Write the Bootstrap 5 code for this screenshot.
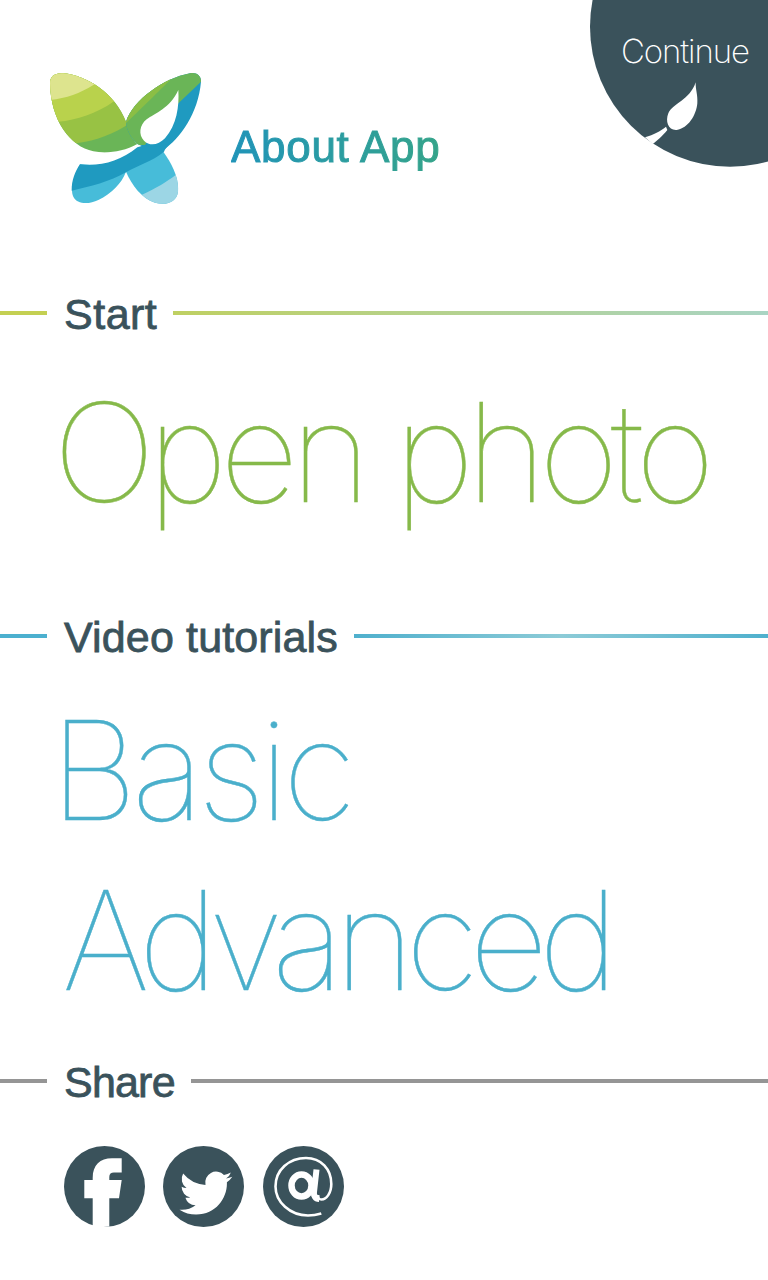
<!DOCTYPE html><html><head><meta charset="utf-8"><title>About App</title><link href="https://cdn.jsdelivr.net/npm/bootstrap@5.3.0/dist/css/bootstrap.min.css" rel="stylesheet"><style>
body{background:#fff;font-family:"Liberation Sans",sans-serif}
.pg{width:768px;height:1280px;overflow:hidden}
.hdr{padding:50px 0 0 30px;height:220px}
.logo{width:200px;height:170px;flex:none}
.ttl{margin:0 0 0 1px;padding-top:73px;font-size:44px;line-height:48px;font-weight:400;letter-spacing:.7px;background:linear-gradient(90deg,#2094b8,#35a48a);-webkit-background-clip:text;background-clip:text;color:transparent;-webkit-text-stroke:1px transparent}
.corner{top:0;right:0;width:188px;height:175px}
.corner svg{width:188px;height:175px;display:block}
.cont{top:29px;left:41px;margin:0;font-family:Inter,sans-serif;font-weight:200;font-size:33px;line-height:44px;letter-spacing:-1.1px;color:#fff}
.sec{height:48px;gap:16px}
.sec h2{margin:0 0 0 1px;padding-top:2px;font-size:43px;line-height:46px;font-weight:400;color:#3a525b;-webkit-text-stroke:.8px #3a525b;white-space:nowrap}
.h-a{letter-spacing:.5px}.h-b{letter-spacing:.15px}.h-c{letter-spacing:-.8px}
.ln{height:4px}
.ln-a{width:47px;flex:none}
.ln-b{flex:1 1 0}
.s1{margin-top:69px}.s2{margin-top:75px}.s3{margin-top:32px}
.g1{background:#c4d052}.g1b{background:linear-gradient(90deg,#bfd062,#a9d4c3)}
.g2{background:#4cb0cf}.g2b{background:linear-gradient(90deg,#4fb0cd,#8ccbd7 50%,#4fb0cd)}
.g3{background:#959595}
.bigt{display:block;font-family:Inter,sans-serif;font-weight:100;font-size:137px;line-height:170px;white-space:nowrap;text-decoration:none;-webkit-text-stroke:.4px currentColor}
.b-o{padding-left:53px;letter-spacing:-7.5px;color:#86b94a}
.b-b{padding-left:50px;letter-spacing:-6px;color:#4aafcb}
.b-a{padding-left:62px;letter-spacing:-9.2px;color:#4aafcb}
.t1{margin-top:30px}.t2{margin-top:25px}
.soc{margin-top:41px;padding-left:64px;gap:18px}
.soc svg{width:81px;height:81px;display:block}
.soc svg:last-child{margin-left:1px}
</style></head><body>
<div class="pg position-relative">
<div class="hdr d-flex align-items-start">
<svg class="logo" viewBox="0 0 600 510" aria-label="logo">
<defs>
<clipPath id="wl"><path d="M60 100C60 78 75 68 100 70C170 76 255 130 288 215C295 245 305 265 322 282C280 305 230 312 190 304C120 290 62 210 60 100Z"/></clipPath>
<clipPath id="wr"><path d="M288 215C310 150 400 85 480 70C500 66 514 78 513 95C505 190 450 265 400 300L340 290L322 282C300 260 290 240 288 215Z"/></clipPath>
<clipPath id="ll"><path d="M150 343C130 380 120 420 130 440C140 462 175 465 205 450C245 430 275 400 288 365L290 340L200 345Z"/></clipPath>
<clipPath id="lr"><path d="M288 365C305 405 335 445 375 458C410 468 440 455 444 425C448 385 425 340 400 305L300 340Z"/></clipPath>
</defs>
<g clip-path="url(#wl)"><rect width="600" height="510" fill="#6ab557"/>
<path d="M40 40H300V220C255 250 200 272 140 280L40 280Z" fill="#98c244"/>
<path d="M40 40H300V130L250 155C200 190 140 210 85 215L40 230Z" fill="#b9d24c"/>
<path d="M40 40H300V70L190 105C150 130 110 145 60 150L40 155Z" fill="#dde48e"/></g>
<g clip-path="url(#wr)"><rect width="600" height="510" fill="#1f9ac0"/>
<path d="M270 230V40H540V70L450 155L400 200L345 285L320 285Z" fill="#6ab557"/>
<path d="M285 222C310 150 360 110 430 80C400 110 340 170 292 215Z" fill="#8bbe45"/></g>
<g clip-path="url(#ll)"><rect width="600" height="510" fill="#47bcd9"/></g>
<g clip-path="url(#lr)"><rect width="600" height="510" fill="#47bcd9"/>
<path d="M336 434C380 415 410 395 436 376L470 360V480H336Z" fill="#9cd6e5"/></g>
<path d="M150 343C210 350 270 335 322 292L345 285C370 295 395 290 420 280C410 292 405 298 402 305C365 335 325 345 288 367C240 395 180 410 125 422C125 390 135 365 150 343Z" fill="#1f9ac0"/>
<path d="M445 120C448 170 440 225 405 265C385 285 360 290 342 272C325 255 328 225 350 208C375 190 420 175 445 120Z" fill="#fff"/>
</svg>
<h1 class="ttl">About App</h1>
</div>
<div class="corner position-absolute">
<svg viewBox="0 0 564 525" aria-label="Continue badge"><circle cx="450" cy="80" r="420" fill="#3a525b"/>
<path d="M347 247C346 268 354 285 352 310C349 345 325 385 290 390C265 392 255 365 265 340C278 310 330 300 347 247Z" fill="#fff"/>
<path d="M258 380C240 395 222 403 195 412L218 432C232 422 245 410 262 390Z" fill="#fff"/></svg>
<p class="cont position-absolute">Continue</p>
</div>
<div class="sec s1 d-flex align-items-center"><span class="ln ln-a g1"></span><h2 class="h-a">Start</h2><span class="ln ln-b g1b"></span></div>
<a class="bigt b-o t1" href="#">Open photo</a>
<div class="sec s2 d-flex align-items-center"><span class="ln ln-a g2"></span><h2 class="h-b">Video tutorials</h2><span class="ln ln-b g2b"></span></div>
<a class="bigt b-b t2" href="#">Basic</a>
<a class="bigt b-a" href="#">Advanced</a>
<div class="sec s3 d-flex align-items-center"><span class="ln ln-a g3"></span><h2 class="h-c">Share</h2><span class="ln ln-b g3"></span></div>
<div class="soc d-flex">
<svg viewBox="0 0 81 81" aria-label="Facebook"><circle cx="40.5" cy="40.5" r="40.5" fill="#3a525b"/><path d="M57.7 12.3H48C36 12.3 28.7 19 28.7 32V34H20.3V52.3H28.7V80.4C34 81.2 40 81.2 45.3 80.6V52.3H55L57.7 34H45.3V31C45.3 28 47 26.6 50 26.6H57.7Z" fill="#fff"/></svg>
<svg viewBox="0 0 81 81" aria-label="Twitter"><circle cx="40.5" cy="40.5" r="40.5" fill="#3a525b"/><path transform="translate(16.5 19) scale(3.3)" d="M5.026 15c6.038 0 9.341-5.003 9.341-9.334 0-.14 0-.282-.006-.422A6.685 6.685 0 0 0 16 3.542a6.658 6.658 0 0 1-1.889.518 3.301 3.301 0 0 0 1.447-1.817 6.533 6.533 0 0 1-2.087.793A3.286 3.286 0 0 0 7.875 6.03a9.325 9.325 0 0 1-6.767-3.429 3.289 3.289 0 0 0 1.018 4.382A3.323 3.323 0 0 1 .64 6.575v.045a3.288 3.288 0 0 0 2.632 3.218 3.203 3.203 0 0 1-.865.115 3.23 3.23 0 0 1-.614-.057 3.283 3.283 0 0 0 3.067 2.277A6.588 6.588 0 0 1 .78 13.58a6.32 6.32 0 0 1-.78-.045A9.344 9.344 0 0 0 5.026 15z" fill="#fff"/></svg>
<svg viewBox="0 0 81 81" aria-label="Email"><circle cx="40.5" cy="40.5" r="40.5" fill="#3a525b"/><g fill="none" stroke="#fff"><path stroke-width="2.6" d="M58.3 67.5C54 68.8 50 69.5 45 69.5C27 69.5 12.5 56 12.5 40.5C12.5 24 26 12 43 12C58 12 68.3 23 68.3 38C68.3 47 63.5 53.5 58.5 53.5C56 53.5 55 52 55.3 49"/><ellipse cx="38.5" cy="39.5" rx="10" ry="11" stroke-width="6.5"/><path stroke-width="6" d="M53.5 23.5L51 46C50.5 50 52.5 53 56 53"/></g></svg>
</div>
</div>
</body></html>
